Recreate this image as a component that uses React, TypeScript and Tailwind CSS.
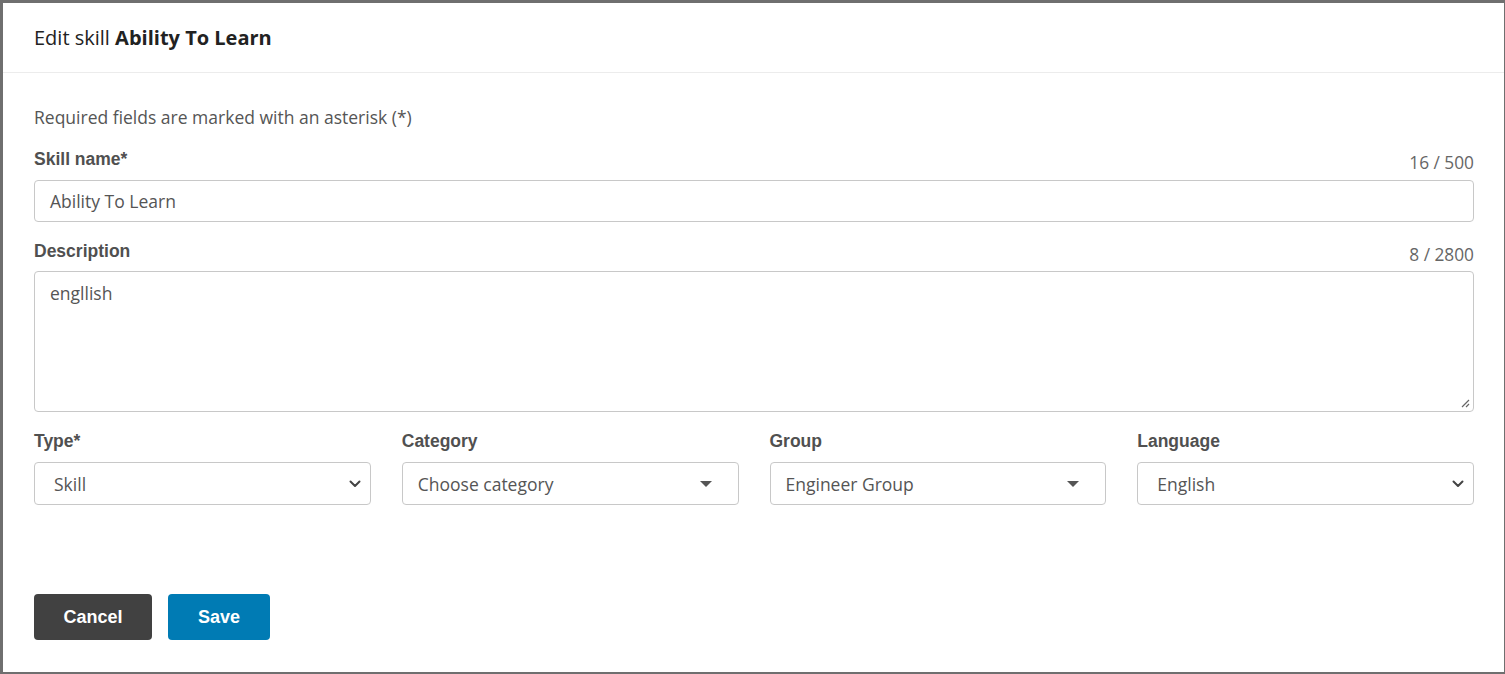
import React from "react";

function Chevron() {
  return (
    <svg width="12" height="8" viewBox="0 0 12 8" className="shrink-0">
      <path d="M1.5 1.5 L6 6 L10.5 1.5" fill="none" stroke="#444" strokeWidth="2" strokeLinecap="round" strokeLinejoin="round" />
    </svg>
  );
}

function Caret() {
  return (
    <svg width="14" height="8" viewBox="0 0 14 8" className="shrink-0">
      <path d="M1 1 L13 1 L7 7 Z" fill="#555" />
    </svg>
  );
}

function Label({ children }: { children: React.ReactNode }) {
  return (
    <div className="font-['Liberation_Sans',Arial,sans-serif] font-bold text-[17.5px] leading-[24px] text-[#505050]">
      {children}
    </div>
  );
}

function SelectBox({ value, kind, pl }: { value: string; kind: "chevron" | "caret"; pl: string }) {
  return (
    <div className={`h-[43px] border border-[#c8c8c8] rounded-[4px] bg-white flex items-center justify-between ${pl} ${kind === "chevron" ? "pr-[9px]" : "pr-[25px]"}`}>
      <span className="text-[17.5px] text-[#555] leading-[24px]">{value}</span>
      {kind === "chevron" ? <Chevron /> : <Caret />}
    </div>
  );
}

export default function App() {
  return (
    <div className="w-[1505px] h-[674px] bg-[#6f6f6f] pt-[3px] pl-[3px] overflow-hidden font-['Open_Sans',sans-serif]">
      <div className="w-[1501px] h-[669px] bg-white flex flex-col">
        <div className="h-[70px] border-b border-[#ececec] flex items-center pl-[31px]">
          <h1 className="text-[20px] text-[#222] leading-[26px]">
            Edit skill <span className="font-bold">Ability To Learn</span>
          </h1>
        </div>
        <div className="pl-[31px] pr-[30px] flex flex-col">
          <p className="mt-[32px] text-[17.5px] leading-[24px] text-[#555]">
            Required fields are marked with an asterisk (*)
          </p>

          <div className="mt-[18px] h-[28px] flex justify-between">
            <div className="self-start"><Label>Skill name*</Label></div>
            <div className="self-end text-[17.3px] leading-[24px] text-[#666]">16 / 500</div>
          </div>
          <div className="mt-[5px] h-[42px] border border-[#c8c8c8] rounded-[4px] flex items-center pl-[15px]">
            <span className="text-[17.5px] text-[#555] leading-[24px]">Ability To Learn</span>
          </div>

          <div className="mt-[17px] h-[28px] flex justify-between">
            <div className="self-start"><Label>Description</Label></div>
            <div className="self-end text-[17.3px] leading-[24px] text-[#666]">8 / 2800</div>
          </div>
          <div className="mt-[4px] h-[141px] border border-[#c8c8c8] rounded-[4px] pl-[15px] pt-[9px] relative">
            <span className="text-[17.5px] text-[#555] leading-[24px]">engllish</span>
            <svg width="9" height="9" viewBox="0 0 9 9" className="absolute right-[3px] bottom-[3px]">
              <path d="M8 1 L1 8 M8 5 L5 8" stroke="#666" strokeWidth="1.2" />
            </svg>
          </div>

          <div className="mt-[17px] grid grid-cols-4 gap-x-[31px]">
            <div>
              <Label>Type*</Label>
              <div className="mt-[9px]"><SelectBox value="Skill" kind="chevron" pl="pl-[19px]" /></div>
            </div>
            <div>
              <Label>Category</Label>
              <div className="mt-[9px]"><SelectBox value="Choose category" kind="caret" pl="pl-[15px]" /></div>
            </div>
            <div>
              <Label>Group</Label>
              <div className="mt-[9px]"><SelectBox value="Engineer Group" kind="caret" pl="pl-[15px]" /></div>
            </div>
            <div>
              <Label>Language</Label>
              <div className="mt-[9px]"><SelectBox value="English" kind="chevron" pl="pl-[19px]" /></div>
            </div>
          </div>

          <div className="mt-[89px] flex gap-[16px]">
            <button className="w-[118px] h-[46px] rounded-[4px] bg-[#414141] text-white font-['Liberation_Sans',Arial,sans-serif] font-bold text-[18px]">
              Cancel
            </button>
            <button className="w-[102px] h-[46px] rounded-[4px] bg-[#007bb4] text-white font-['Liberation_Sans',Arial,sans-serif] font-bold text-[18px]">
              Save
            </button>
          </div>
        </div>
      </div>
    </div>
  );
}
